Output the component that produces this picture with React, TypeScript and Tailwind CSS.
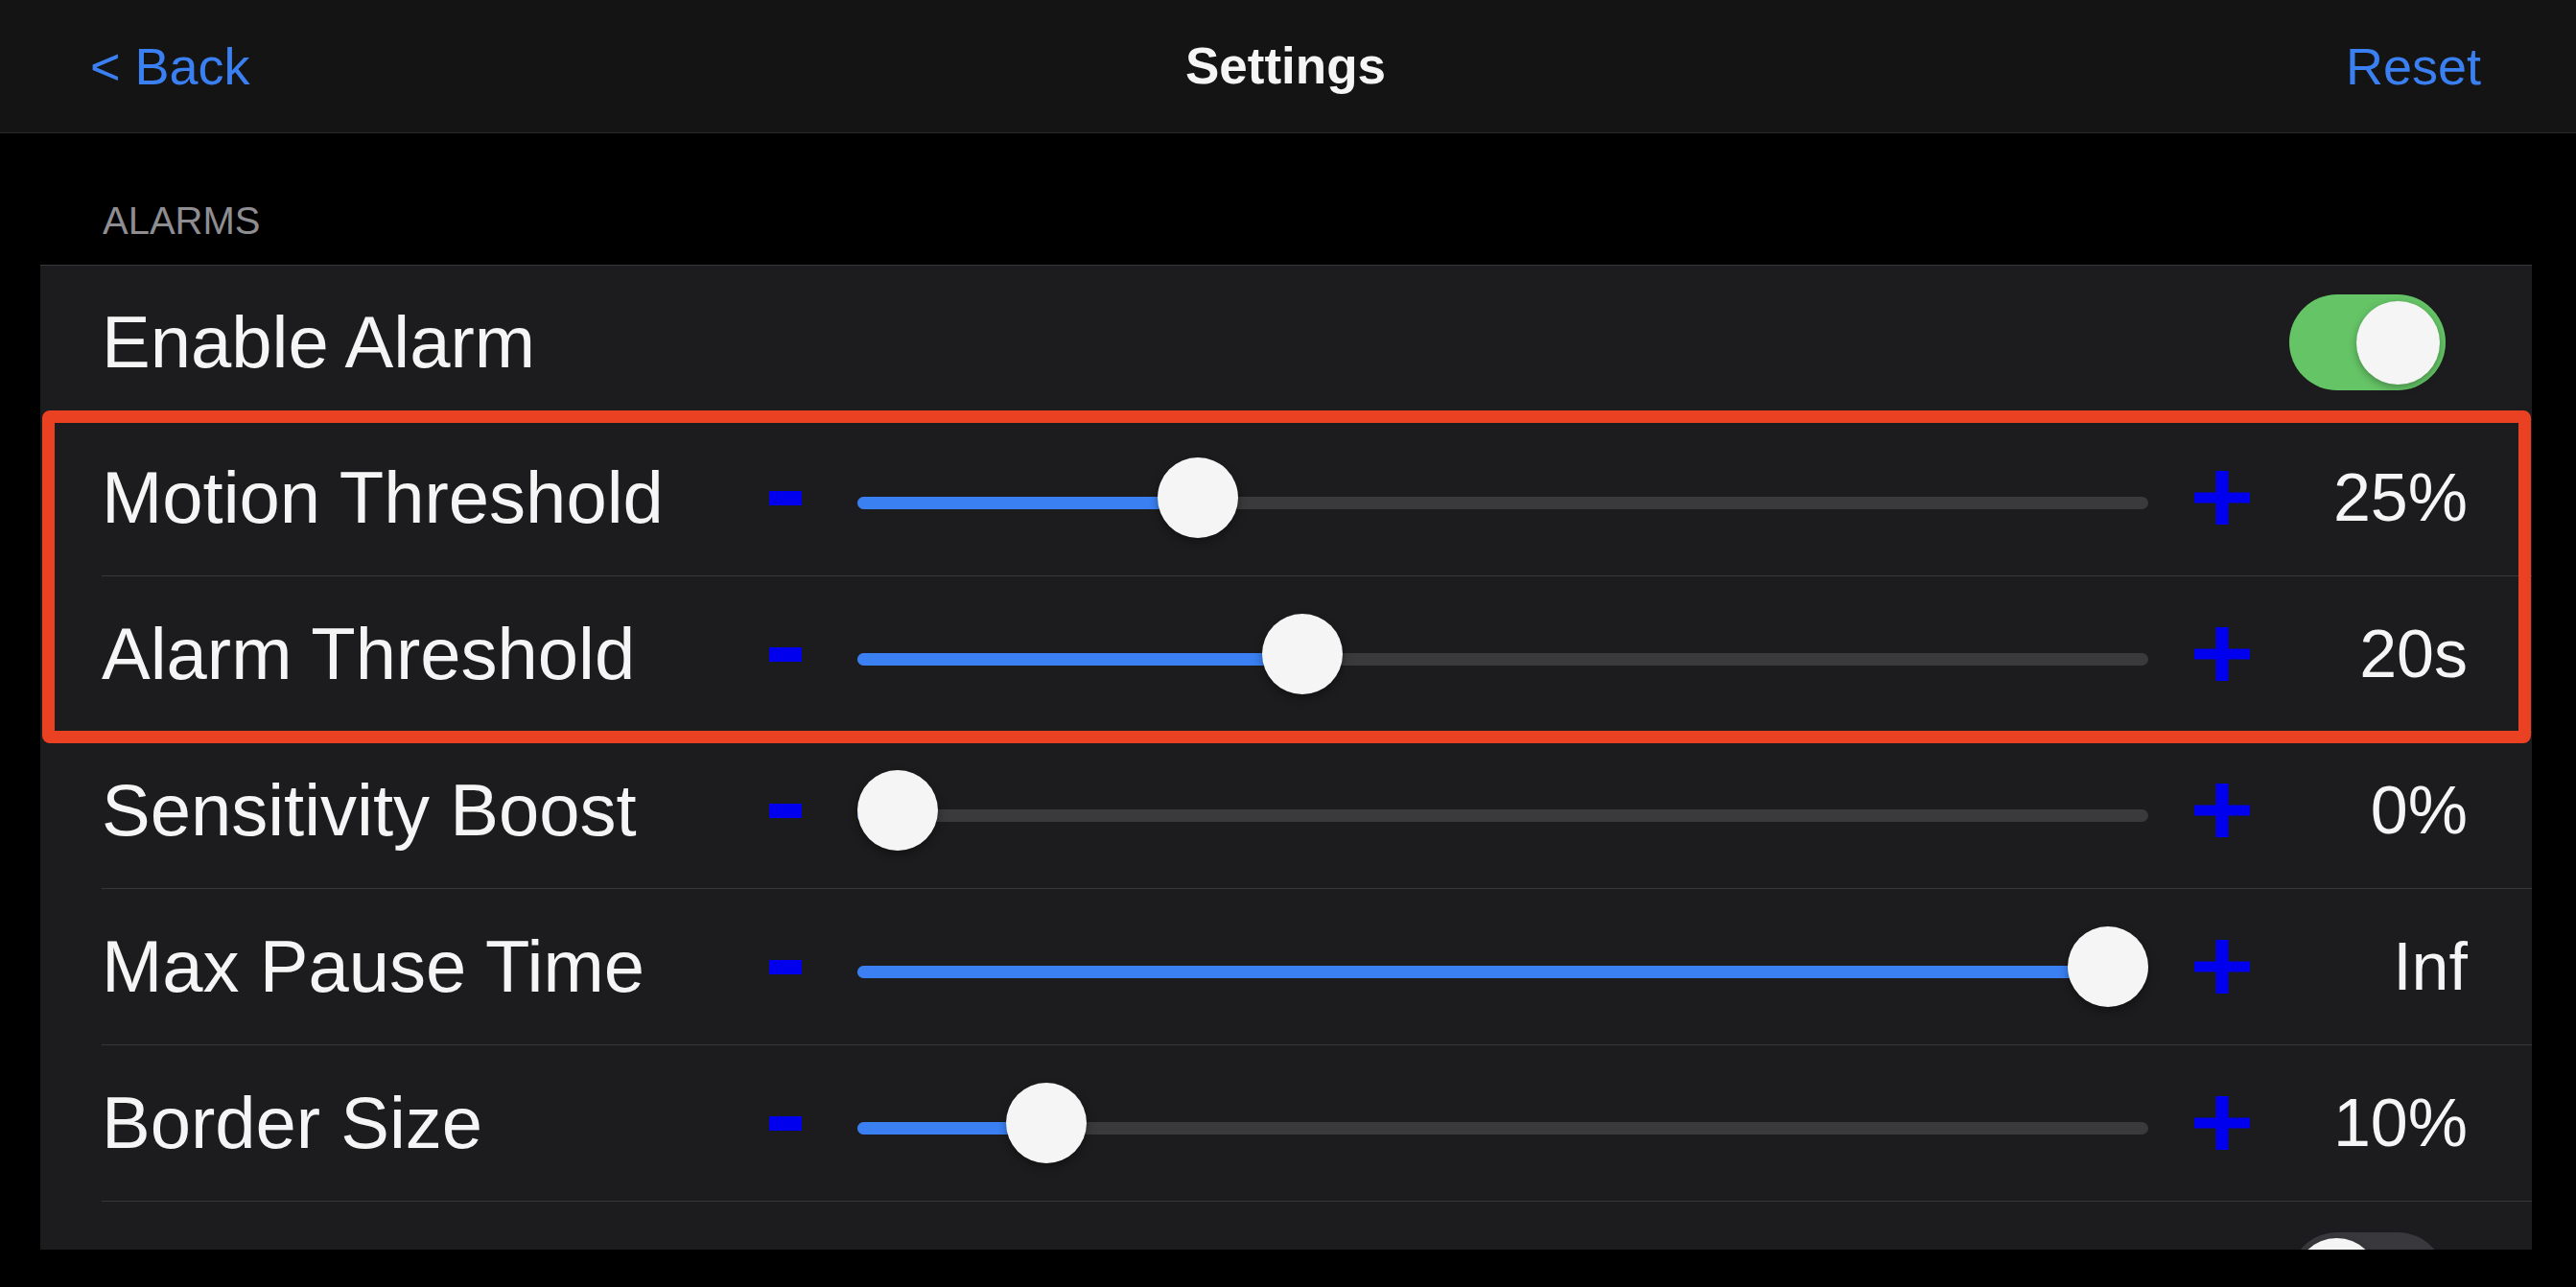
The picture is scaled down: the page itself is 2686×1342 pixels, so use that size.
import React from 'react';

const font = { fontFamily: '"Liberation Sans", Arial, sans-serif' };

type SliderRow = { label: string; value: number; text: string };

const sliders: SliderRow[] = [
  { label: 'Motion Threshold', value: 0.248, text: '25%' },
  { label: 'Alarm Threshold', value: 0.334, text: '20s' },
  { label: 'Sensitivity Boost', value: 0, text: '0%' },
  { label: 'Max Pause Time', value: 1, text: 'Inf' },
  { label: 'Border Size', value: 0.123, text: '10%' },
];

function Toggle({ on }: { on: boolean }) {
  return (
    <div
      className={
        'flex h-[100px] w-[163px] items-center rounded-full px-[6px] ' +
        (on ? 'justify-end bg-[#65c466]' : 'justify-start bg-[#39393d]')
      }
    >
      <div className="h-[87px] w-[87px] rounded-full bg-[#f5f5f5] shadow-[0_3px_8px_rgba(0,0,0,0.3)]" />
    </div>
  );
}

function Plus() {
  return (
    <svg width="58" height="56" viewBox="0 0 58 56" className="shrink-0">
      <rect x="22.5" y="0" width="13" height="56" fill="#0000ee" />
      <rect x="0" y="22.5" width="58" height="11" fill="#0000ee" />
    </svg>
  );
}

function Slider({ value }: { value: number }) {
  // thumb travels between 42px and track width - 42px
  const center = 42 + value * 1262;
  return (
    <div className="relative mt-[10px] h-[13px] w-[1346px] shrink-0 rounded-full bg-[#3a3a3c]">
      <div
        className="absolute left-0 top-0 h-[13px] rounded-full bg-[#3a80f2]"
        style={{ width: center }}
      />
      <div
        className="absolute top-[calc(50%-5px)] h-[84px] w-[84px] -translate-x-1/2 -translate-y-1/2 rounded-full bg-[#f5f5f5] shadow-[0_4px_10px_rgba(0,0,0,0.35)]"
        style={{ left: center }}
      />
    </div>
  );
}

export default function App() {
  return (
    <div className="relative h-[1342px] w-[2686px] overflow-hidden bg-black" style={font}>
      <div className="grid h-[139px] grid-cols-3 items-center border-b border-[#2a2a2c] bg-[#141414] px-[94px] pr-[99px]">
        <div className="text-[54px] text-[#3a80f2]">&lt; Back</div>
        <div className="text-center text-[53px] font-bold text-[#f5f5f5]">Settings</div>
        <div className="text-right text-[54px] text-[#3a80f2]">Reset</div>
      </div>

      <div className="h-[1164px] overflow-hidden">
        <div className="ml-[107px] mt-[71px] text-[40px] leading-none text-[#8d8d92]">ALARMS</div>

        <div className="mt-[26px] ml-[42px] w-[2598px] border-t border-[#38383a] bg-[#1c1c1e]">
          <div className="pl-[64px]">
            <div className="flex h-[161px] items-center border-b border-[#38383a]">
              <div className="text-[76px] text-[#f5f5f5]">Enable Alarm</div>
              <div className="ml-auto mr-[90px]">
                <Toggle on />
              </div>
            </div>

            {sliders.map((s) => (
              <div key={s.label} className="flex h-[163px] items-center border-b border-[#38383a]">
                <div className="w-[696px] shrink-0 text-[76px] text-[#f5f5f5]">{s.label}</div>
                <div className="h-[15px] w-[34px] shrink-0 bg-[#0000ee]" />
                <div className="ml-[58px] flex items-center">
                  <Slider value={s.value} />
                </div>
                <div className="ml-[48px]">
                  <Plus />
                </div>
                <div className="flex-1 pr-[67px] text-right text-[70px] text-[#f5f5f5]">{s.text}</div>
              </div>
            ))}

            <div className="flex h-[163px] items-center">
              <div className="ml-auto mr-[90px]">
                <Toggle on={false} />
              </div>
            </div>
          </div>
        </div>
      </div>

      <div className="pointer-events-none absolute left-[44px] top-[428px] h-[347px] w-[2595px] rounded-[8px] border-[13px] border-[#ea4123]" />
    </div>
  );
}
